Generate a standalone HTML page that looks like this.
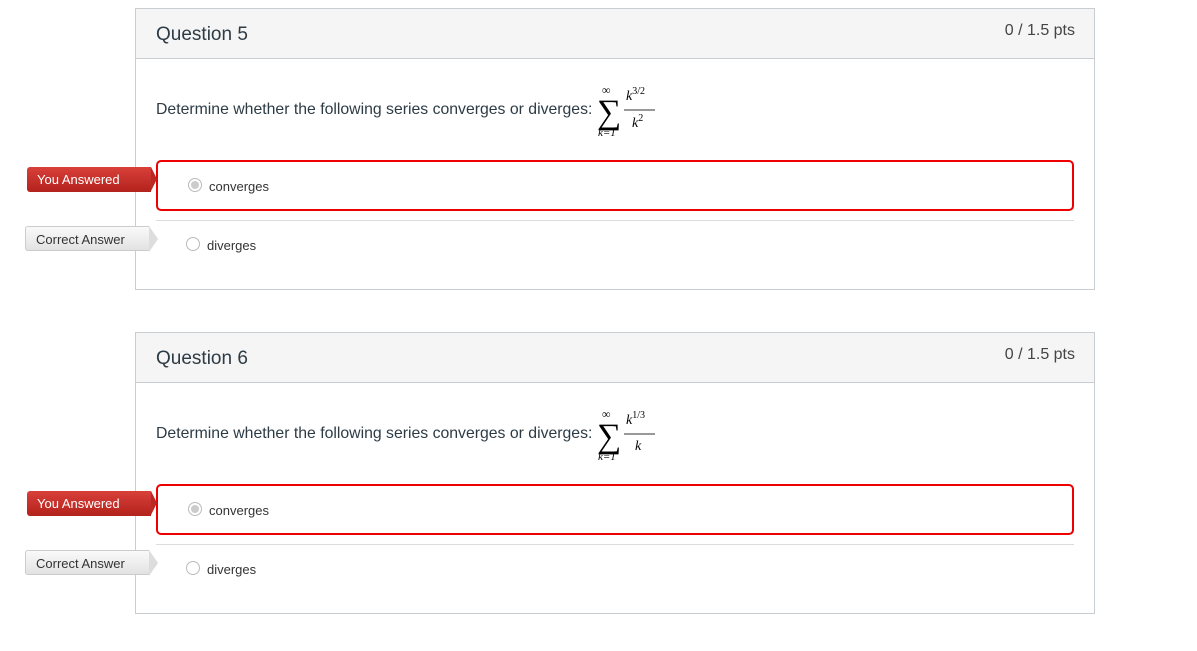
<!DOCTYPE html>
<html><head><style>
body{margin:0;background:#fff;font-family:"Liberation Sans",sans-serif;color:#2d3b45;width:1197px;height:651px;position:relative;overflow:hidden}
.panel{position:absolute;left:135px;width:958px;height:280px;border:1px solid #c7cdd1}
.hdr{height:49px;background:#f5f5f5;border-bottom:1px solid #c7cdd1;position:relative}
.hdr .t{position:absolute;left:20px;top:15px;font-size:19px;color:#2d3b45}
.hdr .p{position:absolute;right:19px;top:13px;font-size:16px;color:#444}
.q{position:absolute;left:20px;top:92px;font-size:15.8px}
.math{position:absolute;font-family:"Liberation Serif",serif;font-style:italic;width:70px;height:64px}
.ans{position:absolute;left:20px;width:914px;height:47px;border:2px solid #e00;border-radius:5px;top:151px}
.sep{position:absolute;left:20px;width:918px;border-top:1px solid #ddd;top:211px}
.rad{position:absolute;width:12px;height:12px;border:1px solid #bbb;border-radius:50%;background:#fff}
.rad.s::after{content:"";position:absolute;left:2px;top:2px;width:8px;height:8px;border-radius:50%;background:#ccc}
.opt{position:absolute;font-size:13px;color:#333}
.lbl{position:absolute;height:25px;line-height:25px;font-size:13px;padding-left:10px;box-sizing:border-box}
.ya{left:27px;width:124px;background:linear-gradient(#d9403a,#b3221c);color:#fff;border-radius:3px 0 0 3px}
.ya::after{content:"";position:absolute;right:-6px;top:0;border-left:6px solid #b92a24;border-top:12.5px solid transparent;border-bottom:12.5px solid transparent}
.ca{left:25px;width:124px;background:linear-gradient(#fafafa,#e2e2e2);color:#333;border:1px solid #ccc;border-right:none;border-radius:3px 0 0 3px}
.ca::after{content:"";position:absolute;right:-9px;top:-1px;border-left:9px solid #ddd;border-top:13px solid transparent;border-bottom:13px solid transparent}
</style></head><body>

<div class="panel" style="top:8px">
<div class="hdr"><span class="t">Question 5</span><span class="p">0 / 1.5 pts</span></div>
<div class="q">Determine whether the following series converges or diverges:</div>
<svg class="math" viewBox="0 0 70 64" style="left:461px;top:74px"><text x="5" y="11" font-size="12" font-style="normal">∞</text><text x="0" y="40" font-size="34" font-style="normal">∑</text><text x="1" y="53" font-size="11">k=1</text><text x="29" y="17" font-size="14">k<tspan font-size="10" dy="-6" font-style="normal">3/2</tspan></text><line x1="27" y1="27" x2="58" y2="27" stroke="#333" stroke-width="1"/><text x="35" y="44" font-size="14">k<tspan font-size="10" dy="-6" font-style="normal">2</tspan></text></svg>
<div class="ans"></div>
<div class="rad s" style="left:52px;top:169px"></div><div class="opt" style="left:73px;top:170px">converges</div>
<div class="sep"></div>
<div class="rad" style="left:50px;top:228px"></div><div class="opt" style="left:71px;top:229px">diverges</div>
</div>
<div class="lbl ya" style="top:167px">You Answered</div>
<div class="lbl ca" style="top:226px">Correct Answer</div>

<div class="panel" style="top:332px">
<div class="hdr"><span class="t">Question 6</span><span class="p">0 / 1.5 pts</span></div>
<div class="q">Determine whether the following series converges or diverges:</div>
<svg class="math" viewBox="0 0 70 64" style="left:461px;top:74px"><text x="5" y="11" font-size="12" font-style="normal">∞</text><text x="0" y="40" font-size="34" font-style="normal">∑</text><text x="1" y="53" font-size="11">k=1</text><text x="29" y="17" font-size="14">k<tspan font-size="10" dy="-6" font-style="normal">1/3</tspan></text><line x1="27" y1="27" x2="58" y2="27" stroke="#333" stroke-width="1"/><text x="38" y="43" font-size="14">k</text></svg>
<div class="ans"></div>
<div class="rad s" style="left:52px;top:169px"></div><div class="opt" style="left:73px;top:170px">converges</div>
<div class="sep"></div>
<div class="rad" style="left:50px;top:228px"></div><div class="opt" style="left:71px;top:229px">diverges</div>
</div>
<div class="lbl ya" style="top:491px">You Answered</div>
<div class="lbl ca" style="top:550px">Correct Answer</div>

</body></html>
